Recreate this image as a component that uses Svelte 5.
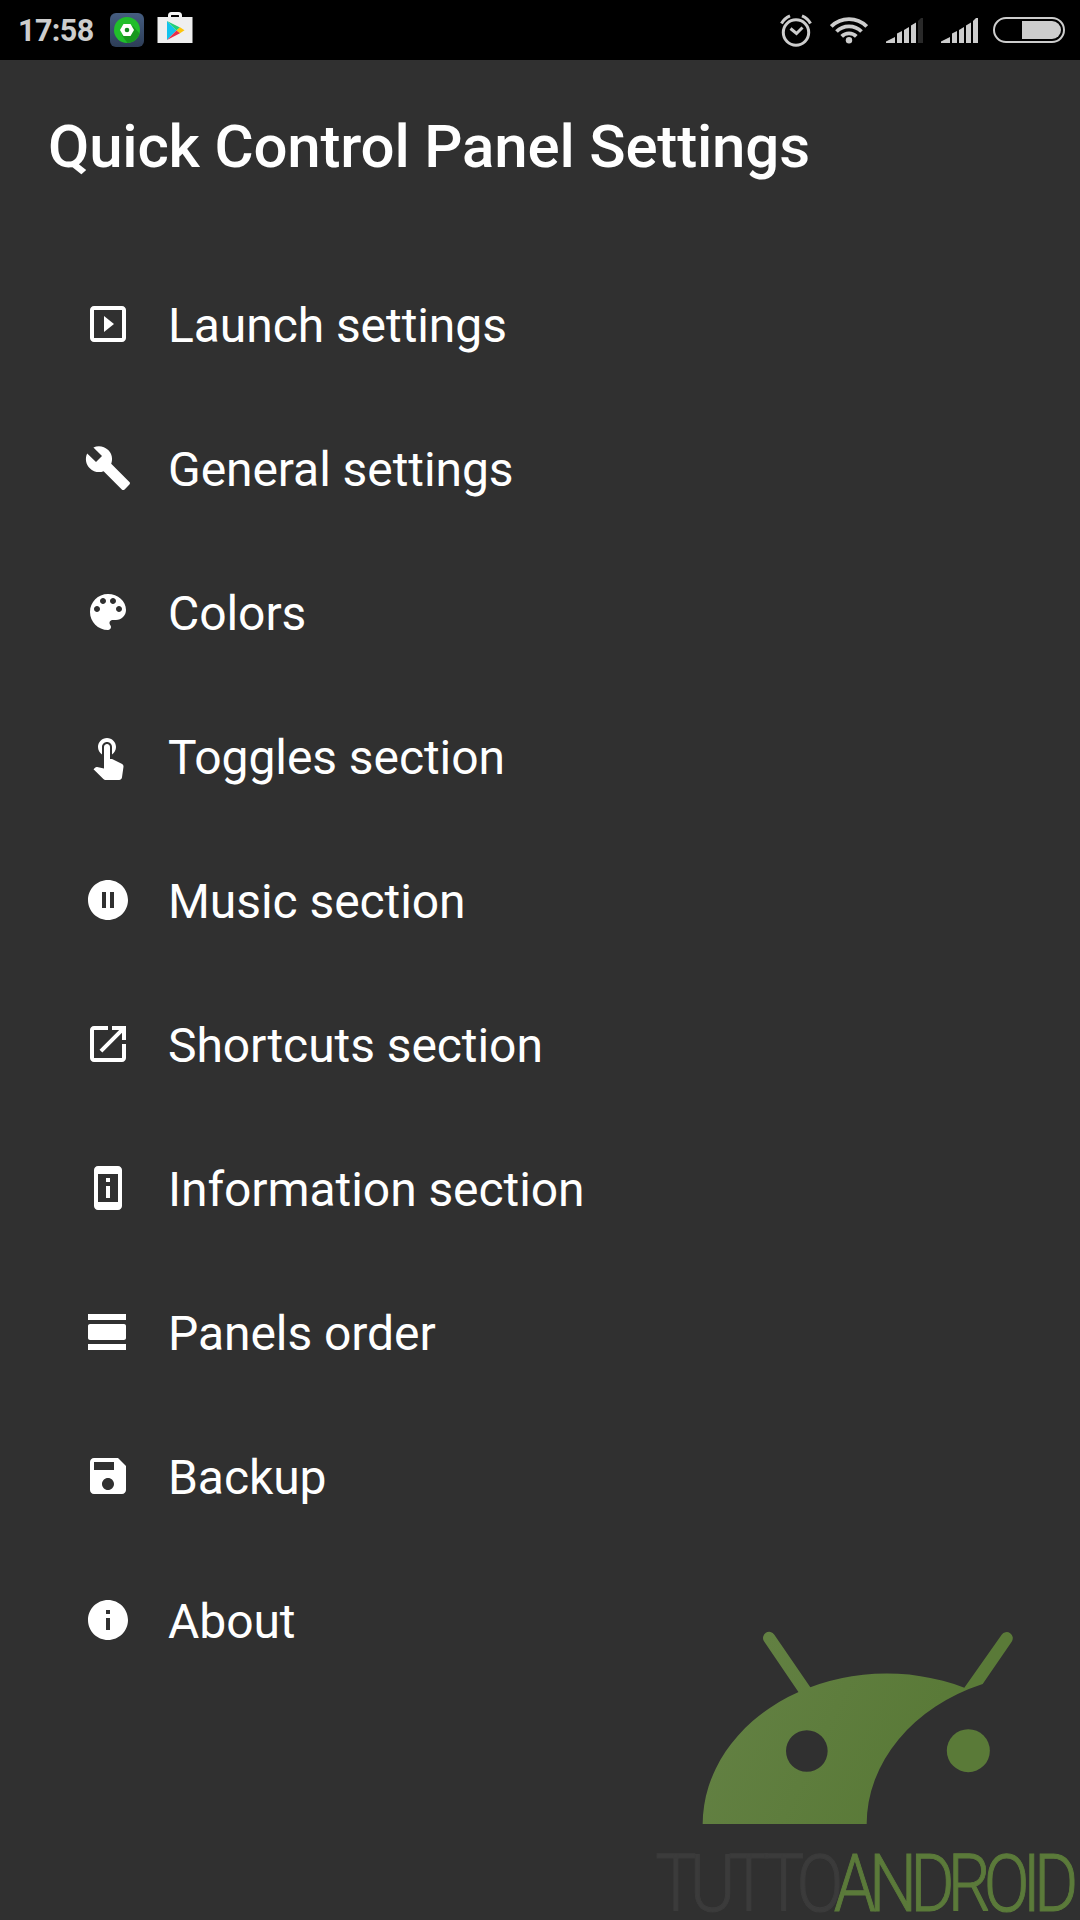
<script>
  const items = [
    {
      label: 'Launch settings',
      path: 'M10 8v8l5-4-5-4zm9-5H5c-1.1 0-2 .9-2 2v14c0 1.1.9 2 2 2h14c1.1 0 2-.9 2-2V5c0-1.1-.9-2-2-2zm0 16H5V5h14v14z'
    },
    {
      label: 'General settings',
      path: 'M22.7 19l-9.1-9.1c.9-2.3.4-5-1.5-6.9-2-2-5-2.4-7.4-1.3L9 6 6 9 1.6 4.7C.4 7.1.9 10.1 2.9 12.1c1.9 1.9 4.6 2.4 6.9 1.5l9.1 9.1c.4.4 1 .4 1.4 0l2.3-2.3c.5-.4.5-1.1.1-1.4z'
    },
    {
      label: 'Colors',
      path: 'M12 3c-4.97 0-9 4.03-9 9s4.03 9 9 9c.83 0 1.5-.67 1.5-1.5 0-.39-.15-.74-.39-1.01-.23-.26-.38-.61-.38-.99 0-.83.67-1.5 1.5-1.5H16c2.76 0 5-2.24 5-5 0-4.42-4.03-8-9-8zm-5.5 9c-.83 0-1.5-.67-1.5-1.5S5.67 9 6.5 9 8 9.67 8 10.5 7.33 12 6.5 12zm3-4C8.67 8 8 7.33 8 6.5S8.67 5 9.5 5s1.5.67 1.5 1.5S10.33 8 9.5 8zm5 0c-.83 0-1.5-.67-1.5-1.5S13.67 5 14.5 5s1.5.67 1.5 1.5S15.33 8 14.5 8zm3 4c-.83 0-1.5-.67-1.5-1.5S16.67 9 17.5 9s1.5.67 1.5 1.5-.67 1.5-1.5 1.5z'
    },
    {
      label: 'Toggles section',
      path: 'M9 11.24V7.5C9 6.12 10.12 5 11.5 5S14 6.12 14 7.5v3.74c1.21-.81 2-2.18 2-3.74C16 5.01 13.99 3 11.5 3S7 5.01 7 7.5c0 1.56.79 2.93 2 3.74zm9.84 4.63l-4.54-2.26c-.17-.07-.35-.11-.54-.11H13v-6c0-.83-.67-1.5-1.5-1.5S10 6.67 10 7.5v10.74l-3.43-.72c-.08-.01-.15-.03-.24-.03-.31 0-.59.13-.79.33l-.79.8 4.94 4.94c.27.27.65.44 1.06.44h6.79c.75 0 1.33-.55 1.44-1.28l.75-5.27c.01-.07.02-.14.02-.2 0-.62-.38-1.16-.91-1.38z'
    },
    {
      label: 'Music section',
      path: 'M12 2C6.48 2 2 6.48 2 12s4.48 10 10 10 10-4.48 10-10S17.52 2 12 2zm-1 14H9V8h2v8zm4 0h-2V8h2v8z'
    },
    {
      label: 'Shortcuts section',
      path: 'M19 19H5V5h7V3H5c-1.11 0-2 .9-2 2v14c0 1.1.89 2 2 2h14c1.1 0 2-.9 2-2v-7h-2v7zM14 3v2h3.59l-9.83 9.83 1.41 1.41L19 6.41V10h2V3h-7z'
    },
    {
      label: 'Information section',
      path: 'M13 7h-2v2h2V7zm0 4h-2v6h2v-6zm4-9.99L7 1c-1.1 0-2 .9-2 2v18c0 1.1.9 2 2 2h10c1.1 0 2-.9 2-2V3c0-1.1-.9-1.99-2-1.99zM17 19H7V5h10v14z'
    },
    {
      label: 'Panels order',
      path: 'M2 21h19v-3H2v3zM20 8H3c-.55 0-1 .45-1 1v6c0 .55.45 1 1 1h17c.55 0 1-.45 1-1V9c0-.55-.45-1-1-1zM2 3v3h19V3H2z'
    },
    {
      label: 'Backup',
      path: 'M17 3H5c-1.11 0-2 .9-2 2v14c0 1.1.89 2 2 2h14c1.1 0 2-.9 2-2V7l-4-4zm-5 16c-1.66 0-3-1.34-3-3s1.34-3 3-3 3 1.34 3 3-1.34 3-3 3zm3-10H5V5h10v4z'
    },
    {
      label: 'About',
      path: 'M12 2C6.48 2 2 6.48 2 12s4.48 10 10 10 10-4.48 10-10S17.52 2 12 2zm1 15h-2v-6h2v6zm0-8h-2V7h2v2z'
    }
  ];

  const signalBars = [
    'M0 25v-1.5L9 19v6z',
    'M11 25v-9.5l5-2.5v12z',
    'M18 25V12l5-3v16z',
    'M25 25V7.500l5-3V25z',
    'M32 25V3l3-3h2v25z'
  ];
</script>

{#snippet signal(level)}
  <svg class="signal" viewBox="0 0 37 25" width="37" height="25">
    {#each signalBars as bar, i}
      <path d={bar} fill={i < level ? '#cdcdcd' : '#292929'} />
    {/each}
  </svg>
{/snippet}

<div class="screen">
  <header class="status">
    <span class="clock">17:58</span>
    <svg class="app" viewBox="0 0 34 34" width="34" height="34">
      <defs>
        <linearGradient id="tile" x2="0" y2="1">
          <stop offset="0" stop-color="#455d80" />
          <stop offset="1" stop-color="#2d3d57" />
        </linearGradient>
      </defs>
      <rect width="34" height="34" rx="6" fill="url(#tile)" />
      <circle cx="17" cy="17" r="13" fill="#20be2b" />
      <path d="M12 22.500L23 13l6.500 7.500A13 13 0 0 1 17.500 30z" fill="#17981f" />
      <path d="M13.500 11h7l3.500 6-3.500 6h-7L10 17z" fill="#fff" />
      <circle cx="17" cy="17" r="2.300" fill="#138b20" />
    </svg>
    <svg class="store" viewBox="0 0 36 32" width="36" height="32">
      <path d="M12.500 6V3.500a2 2 0 0 1 2-2h7a2 2 0 0 1 2 2V6" fill="none" stroke="#f5f5f5" stroke-width="3" />
      <path d="M0.500 5h35v26h-35z" fill="#efefef" />
      <path d="M10 9l9.500 9.500L10 28z" fill="#12c3ee" />
      <path d="M10 9l13 6.500-3.500 3z" fill="#21cf77" />
      <path d="M23 15.200l4.500 3-4.500 3-3.500-2.700z" fill="#fdc50b" />
      <path d="M10 28l9.500-9.500 3.500 2.800z" fill="#e92e47" />
    </svg>

    <div class="indicators">
      <svg viewBox="0 0 32 33" width="32" height="33">
        <g fill="none" stroke="#cdcdcd" stroke-width="3">
          <circle cx="16" cy="18.500" r="12.700" />
          <path d="M10.500 14.500l6 5 6-6" />
          <path d="M1.500 9.500q2.500-5 8.500-7.700M30.500 9.500q-2.500-5-8.500-7.700" />
        </g>
      </svg>
      <svg class="wifi" viewBox="0 0 38 28" width="38" height="28">
        <g fill="none" stroke="#cdcdcd" stroke-width="3.800">
          <path d="M1.300 10.500a25 25 0 0 1 35.400 0" />
          <path d="M6.500 15.500a17.700 17.700 0 0 1 25 0" />
          <path d="M11.700 20.300a10.400 10.400 0 0 1 14.600 0" />
        </g>
        <circle cx="19" cy="24.300" r="3.200" fill="#cdcdcd" />
      </svg>
      {@render signal(4)}
      {@render signal(5)}
      <svg class="battery" viewBox="0 0 72 26" width="72" height="26">
        <rect x="1" y="1" width="70" height="24" rx="12" fill="none" stroke="#cdcdcd" stroke-width="2" />
        <path d="M29 4h30a9 9 0 0 1 0 18H29z" fill="#cdcdcd" />
      </svg>
    </div>
  </header>

  <h1>Quick Control Panel Settings</h1>

  <ul>
    {#each items as item}
      <li>
        <svg viewBox="0 0 24 24" width="48" height="48" fill="currentColor" aria-hidden="true">
          <path d={item.path} />
        </svg>
        <span>{item.label}</span>
      </li>
    {/each}
  </ul>

  <!-- watermark laid over the bottom right corner -->
  <svg class="watermark" viewBox="0 0 1320 930" width="440" height="310">
    <defs>
      <linearGradient id="green" gradientUnits="userSpaceOnUse" x1="300" y1="250" x2="800" y2="490">
        <stop offset="0" stop-color="#628042" />
        <stop offset="1" stop-color="#5a7a38" />
      </linearGradient>
    </defs>
    <g fill="url(#green)">
      <path
        fill-rule="evenodd"
        d="M188 642A552 453 0 0 1 973 233L1085 74A18 18 0 0 1 1115 95L1028 222A552 453 0 0 0 680 642zM438 423a62.500 62.500 0 1 0 125 0a62.500 62.500 0 1 0-125 0z"
      />
      <path d="M372 94A18 18 0 0 1 403 74L512 233L520 260L485 260z" />
      <circle cx="985" cy="422" r="64.500" />
    </g>
    <text class="tutto" x="46" y="902" textLength="543" lengthAdjust="spacingAndGlyphs">TUTTO</text>
    <text class="android" x="581" y="902" textLength="713" lengthAdjust="spacingAndGlyphs">ANDROID</text>
  </svg>
</div>

<style>
  :global(body) {
    margin: 0;
    background: #303030;
  }

  .screen {
    position: relative;
    width: 1080px;
    height: 1920px;
    overflow: hidden;
    background: #303030;
    color: #fff;
    font-family: Roboto, sans-serif;
  }

  svg {
    display: block;
    flex: none;
  }

  .status {
    display: flex;
    align-items: center;
    box-sizing: border-box;
    height: 60px;
    padding: 0 15px 0 18px;
    background: #000;
  }

  .clock {
    width: 92px;
    padding-top: 2px;
    color: #cdcdcd;
    font-size: 30.5px;
    font-weight: 700;
    letter-spacing: -0.6px;
    line-height: 36px;
  }

  .store {
    margin: 0 0 4px 13px;
  }

  .indicators {
    display: flex;
    align-items: center;
    margin-left: auto;
  }

  .wifi {
    margin-left: 18px;
  }

  .signal {
    margin: 1px 0 0 18px;
  }

  .battery {
    margin-left: 15px;
  }

  h1 {
    box-sizing: border-box;
    height: 192px;
    margin: 0;
    padding: 51px 48px 0;
    font-size: 60px;
    font-weight: 500;
    letter-spacing: -0.18px;
    line-height: 72px;
  }

  ul {
    margin: 0;
    padding: 0;
    list-style: none;
  }

  li {
    display: flex;
    align-items: center;
    height: 144px;
    padding-left: 84px;
  }

  li span {
    margin-left: 36px;
    padding-top: 3px;
    font-size: 48px;
    letter-spacing: -0.07px;
    line-height: 56px;
  }

  .watermark {
    position: absolute;
    right: 0;
    bottom: 0;
  }

  .watermark text {
    font-size: 238px;
    font-weight: 300;
    letter-spacing: -24px;
    stroke-width: 3px;
  }

  .tutto {
    fill: #3b3b3b;
    stroke: #3b3b3b;
  }

  .android {
    fill: #5b7a3a;
    stroke: #5b7a3a;
  }
</style>
